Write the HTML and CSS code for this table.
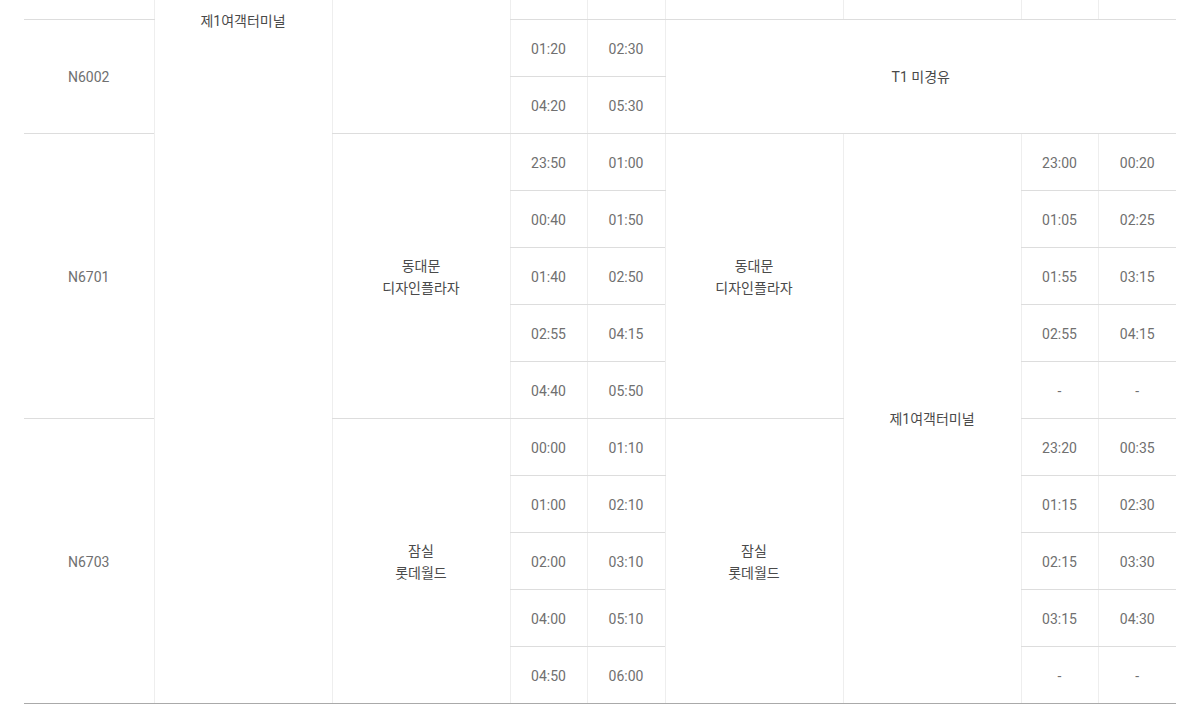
FILE: index.html
```html
<!DOCTYPE html>
<html lang="ko">
<head>
<meta charset="utf-8">
<link rel="stylesheet" href="styles.css">
</head>
<body>
<div class="wrap">
<table class="tt">
  <colgroup>
    <col class="c-route"><col class="c-stop"><col class="c-stop"><col class="c-time"><col class="c-time2"><col class="c-stop"><col class="c-stop"><col class="c-time"><col class="c-time2">
  </colgroup>
  <tbody>
    <tr class="first">
      <td class="first-col"></td>
      <td rowspan="13" class="top end">제1여객터미널</td>
      <td rowspan="3"></td>
      <td></td><td></td><td></td><td></td><td></td><td></td>
    </tr>
    <tr>
      <td rowspan="2" class="first-col">N6002</td>
      <td>01:20</td><td>02:30</td>
      <td rowspan="2" colspan="4" class="kr">T1 미경유</td>
    </tr>
    <tr>
      <td>04:20</td><td>05:30</td>
    </tr>
    <tr>
      <td rowspan="5" class="first-col">N6701</td>
      <td rowspan="5" class="kr">동대문<br>디자인플라자</td>
      <td>23:50</td><td>01:00</td>
      <td rowspan="5" class="kr">동대문<br>디자인플라자</td>
      <td rowspan="10" class="kr end">제1여객터미널</td>
      <td>23:00</td><td>00:20</td>
    </tr>
    <tr><td>00:40</td><td>01:50</td><td>01:05</td><td>02:25</td></tr>
    <tr><td>01:40</td><td>02:50</td><td>01:55</td><td>03:15</td></tr>
    <tr><td>02:55</td><td>04:15</td><td>02:55</td><td>04:15</td></tr>
    <tr><td>04:40</td><td>05:50</td><td>-</td><td>-</td></tr>
    <tr>
      <td rowspan="5" class="first-col end">N6703</td>
      <td rowspan="5" class="kr end">잠실<br>롯데월드</td>
      <td>00:00</td><td>01:10</td>
      <td rowspan="5" class="kr end">잠실<br>롯데월드</td>
      <td>23:20</td><td>00:35</td>
    </tr>
    <tr><td>01:00</td><td>02:10</td><td>01:15</td><td>02:30</td></tr>
    <tr><td>02:00</td><td>03:10</td><td>02:15</td><td>03:30</td></tr>
    <tr><td>04:00</td><td>05:10</td><td>03:15</td><td>04:30</td></tr>
    <tr><td class="end">04:50</td><td class="end">06:00</td><td class="end">-</td><td class="end">-</td></tr>
  </tbody>
</table>
</div>
</body>
</html>
```
FILE: styles.css
```css
html, body {
  margin: 0;
  padding: 0;
  background: #fff;
}
.wrap {
  padding: 0 8px 0 24px;
  overflow: hidden;
}
.tt {
  width: 1152px;
  margin-top: -38px;
  border-collapse: collapse;
  table-layout: fixed;
  font-family: Roboto, "Noto Sans CJK KR", sans-serif;
  font-size: 14px;
  color: #707070;
}
.c-route { width: 130px; }
.c-stop { width: 178px; }
.c-time { width: 77px; }
.c-time2 { width: 78px; }
.tt tr { height: 57px; }
.tt td {
  padding: 2px 0 0;
  text-align: center;
  vertical-align: middle;
  line-height: 22px;
  border-bottom: 1px solid #ddd;
  border-left: 1px solid #eee;
}
.tt td.first-col { border-left: none; }
.tt td.kr { color: #4a4a4a; }
.tt td.top {
  vertical-align: top;
  padding-top: 48px;
  color: #4a4a4a;
}
.tt td.end { border-bottom: 1px solid #aaa; }
```
